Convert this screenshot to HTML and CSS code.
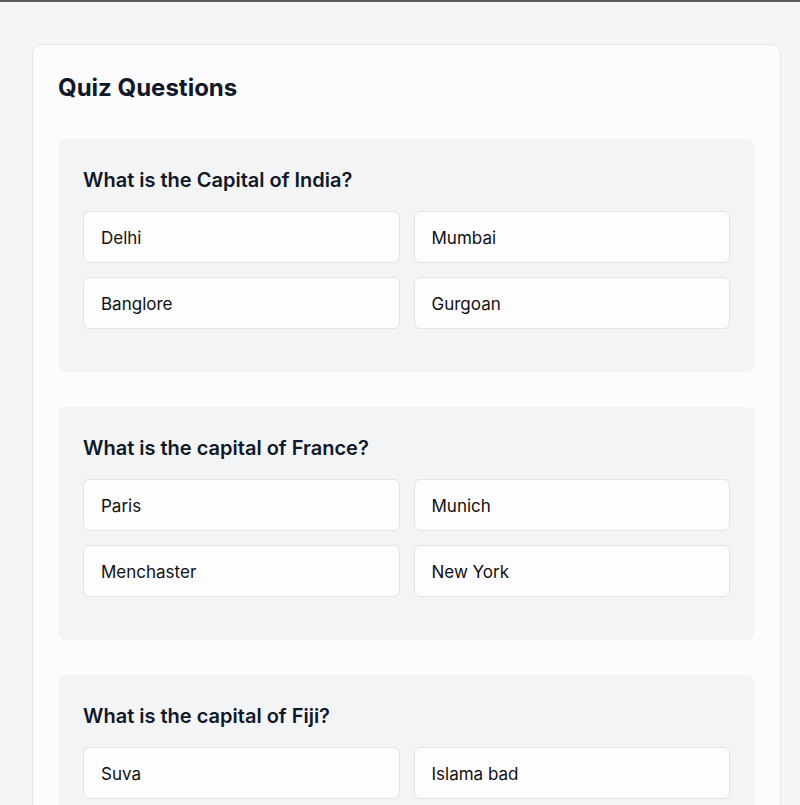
FILE: index.html
```html
<!DOCTYPE html>
<html>
<head>
<meta charset="utf-8">
<link rel="stylesheet" href="styles.css">
</head>
<body>
<div class="topbar"></div>
<main class="card">
  <h1 class="title">Quiz Questions</h1>
  <section class="question">
    <h2 class="q-text">What is the Capital of India?</h2>
    <div class="options">
      <div class="option">Delhi</div>
      <div class="option">Mumbai</div>
      <div class="option">Banglore</div>
      <div class="option">Gurgoan</div>
    </div>
  </section>
  <section class="question">
    <h2 class="q-text">What is the capital of France?</h2>
    <div class="options">
      <div class="option">Paris</div>
      <div class="option">Munich</div>
      <div class="option">Menchaster</div>
      <div class="option">New York</div>
    </div>
  </section>
  <section class="question">
    <h2 class="q-text">What is the capital of Fiji?</h2>
    <div class="options">
      <div class="option">Suva</div>
      <div class="option">Islama bad</div>
      <div class="option">Delhi</div>
      <div class="option">Kathmandu</div>
    </div>
  </section>
</main>
</body>
</html>
```
FILE: styles.css
```css
* { box-sizing: border-box; }
html, body {
  margin: 0;
  padding: 0;
  background: #f4f5f7;
  font-family: Inter, "Liberation Sans", sans-serif;
  color: #111827;
}
.topbar {
  height: 2px;
  background: #5a5a5e;
}
.card {
  margin: 42px 0 0 32px;
  width: 749px;
  background: #fcfbfd;
  border: 1px solid #e6e7eb;
  border-radius: 10px;
  padding: 27px 25px 25px 25px;
}
.title {
  margin: 0 0 35px 0;
  font-size: 24px;
  line-height: 32px;
  font-weight: 700;
}
.question {
  background: #f3f4f6;
  border-radius: 8px;
  padding: 27px 25px 43px 25px;
  margin-bottom: 35px;
}
.q-text {
  margin: 0 0 17px 0;
  font-size: 20px;
  line-height: 28px;
  font-weight: 600;
}
.options {
  display: grid;
  grid-template-columns: 1fr 1fr;
  gap: 14px;
}
.option {
  height: 52px;
  display: flex;
  align-items: center;
  padding: 1px 0 0 17px;
  background: #fdfcfe;
  border: 1px solid #e2e3e7;
  border-radius: 6px;
  font-size: 17px;
  color: #111;
}
```
